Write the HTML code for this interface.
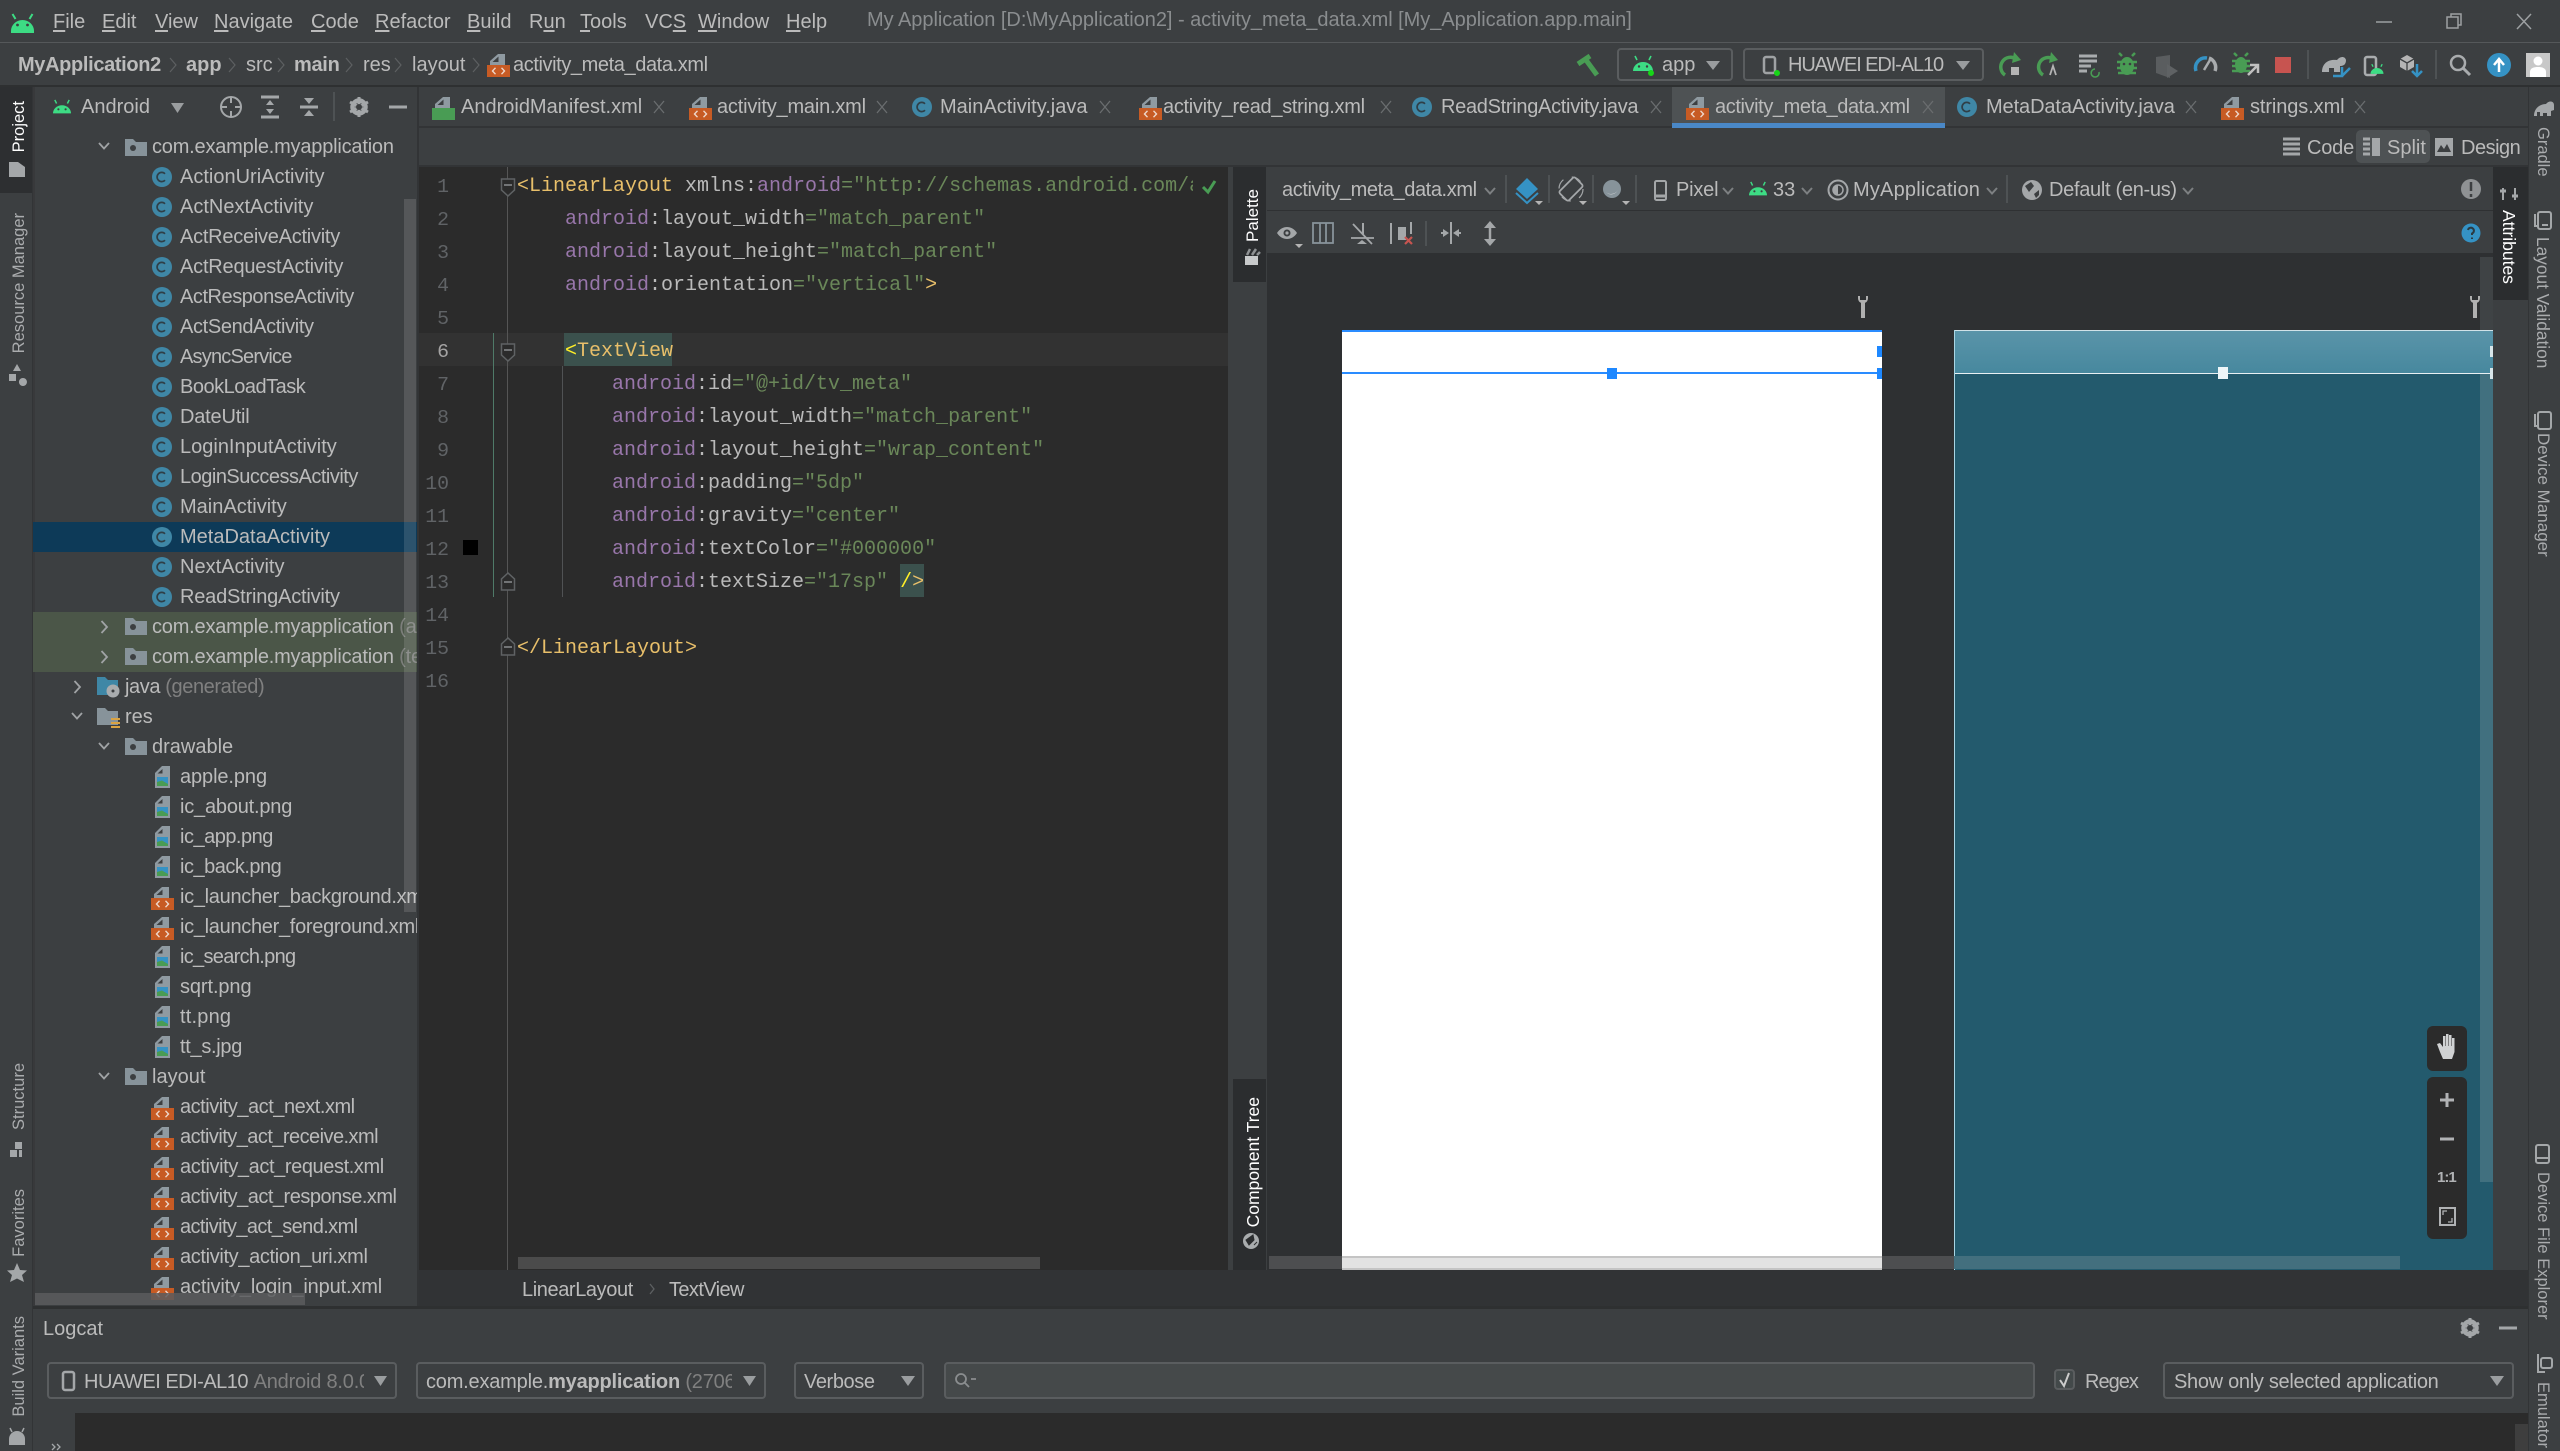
<!DOCTYPE html>
<html><head><meta charset="utf-8"><title>activity_meta_data.xml</title>
<style>
html,body{margin:0;padding:0;background:#3c3f41}
body{position:relative;width:2560px;height:1451px;overflow:hidden;font-family:"Liberation Sans",sans-serif;color:#bbb}
.b{position:absolute}
.t{position:absolute;white-space:nowrap;line-height:30px;font-size:20px;color:#bbb}
.m{position:absolute;white-space:pre;font:20px/30px "Liberation Mono",monospace;color:#bababa}
.n{position:absolute;left:400px;width:49px;text-align:right;font:19.83px/30px "Liberation Mono",monospace;color:#606366}
.g{color:#6a8759}.p{color:#9876aa}.y{color:#e8bf6a}.h{color:#ffef28}
u{text-decoration:underline;text-underline-offset:2px}
.vl,.vr{position:absolute;white-space:nowrap;font-size:16.5px;line-height:24px;width:24px;color:#aaacae;writing-mode:vertical-rl}
.vl{transform:rotate(180deg)}
.cb{position:absolute;border:2px solid #5a5d5f;border-radius:4px;box-sizing:border-box;background:#3c3f41}
.cl{position:absolute;overflow:hidden;height:30px}
.q{letter-spacing:-.4px}
</style></head><body>

<!-- backgrounds -->
<div class="b" style="left:0;top:42px;width:2560px;height:1px;background:#55585a"></div>
<div class="b" style="left:0;top:85px;width:2560px;height:2px;background:#2e3031"></div>
<div class="b" style="left:33px;top:87px;width:2px;height:1219px;background:#38393b"></div>
<div class="b" style="left:0;top:87px;width:32px;height:106px;background:#2d2f31"></div>
<div class="b" style="left:32px;top:87px;width:1px;height:1364px;background:#323436"></div>
<div class="b" style="left:417px;top:87px;width:2px;height:1219px;background:#323436"></div>
<div class="b" style="left:419px;top:126px;width:2109px;height:2px;background:#323436"></div>
<div class="b" style="left:419px;top:165px;width:2109px;height:2px;background:#323436"></div>
<div class="b" style="left:1672px;top:87px;width:273px;height:36px;background:#4e5254"></div>
<div class="b" style="left:1672px;top:123px;width:273px;height:5px;background:#4a88c7"></div>
<div class="b" style="left:2356px;top:130px;width:74px;height:33px;background:#4e5254;border-radius:5px"></div>
<!-- selection + changed rows -->
<div class="b" style="left:33px;top:522px;width:384px;height:30px;background:#0d3a58"></div>
<div class="b" style="left:33px;top:612px;width:384px;height:60px;background:#4b5648"></div>
<!-- editor -->
<div class="b" style="left:419px;top:167px;width:809px;height:1103px;background:#2b2b2b"></div>
<div class="b" style="left:419px;top:333px;width:809px;height:33px;background:#323232"></div>
<div class="b" style="left:564px;top:333px;width:108px;height:33px;background:#3b514d"></div>
<div class="b" style="left:900px;top:564px;width:24px;height:33px;background:#3b514d"></div>
<div class="b" style="left:507px;top:167px;width:1px;height:1103px;background:#555"></div>
<div class="b" style="left:493px;top:333px;width:1px;height:264px;background:#4f7a68"></div>
<div class="b" style="left:562px;top:366px;width:1px;height:231px;background:#505254"></div>
<div class="b" style="left:463px;top:540px;width:15px;height:15px;background:#000"></div>
<!-- palette strip -->
<div class="b" style="left:1233px;top:167px;width:33px;height:115px;background:#2b2d2f"></div>
<div class="b" style="left:1233px;top:1079px;width:33px;height:191px;background:#2b2d2f"></div>
<!-- design area -->
<div class="b" style="left:1267px;top:210px;width:1226px;height:1px;background:#2f3133"></div>
<div class="b" style="left:1267px;top:253px;width:1226px;height:1017px;background:#2e3032"></div>
<div class="b" style="left:2493px;top:167px;width:35px;height:133px;background:#2b2d2f"></div>
<div class="b" style="left:2528px;top:87px;width:1px;height:1364px;background:#323436"></div>
<!-- artboards -->
<div class="b" style="left:1342px;top:330px;width:540px;height:940px;background:#fff"></div>
<div class="b" style="left:1342px;top:330px;width:540px;height:2px;background:#2a8cff"></div>
<div class="b" style="left:1342px;top:372px;width:540px;height:2px;background:#2a8cff"></div>
<div class="b" style="left:1607px;top:368px;width:10px;height:11px;background:#1e88ff"></div>
<div class="b" style="left:1877px;top:346px;width:5px;height:11px;background:#1e88ff"></div>
<div class="b" style="left:1877px;top:368px;width:5px;height:11px;background:#1e88ff"></div>
<div class="b" style="left:1954px;top:330px;width:539px;height:940px;background:#235a6d"></div>
<div class="b" style="left:1954px;top:331px;width:539px;height:42px;background:linear-gradient(#5a94a9,#47889e)"></div>
<!-- design scrollbars -->
<div class="b" style="left:2480px;top:257px;width:13px;height:73px;background:#3f4345"></div>
<div class="b" style="left:2480px;top:374px;width:13px;height:808px;background:#41707f"></div>
<div class="b" style="left:1954px;top:330px;width:539px;height:1px;background:#d0e2e8"></div>
<div class="b" style="left:1954px;top:373px;width:539px;height:1px;background:#e8f0f3"></div>
<div class="b" style="left:1954px;top:330px;width:1px;height:940px;background:#a9d6e4"></div>
<div class="b" style="left:2218px;top:367px;width:10px;height:12px;background:#eef6f8"></div>
<div class="b" style="left:2490px;top:346px;width:3px;height:11px;background:#d8e6ea"></div>
<div class="b" style="left:2490px;top:368px;width:3px;height:11px;background:#d8e6ea"></div>
<div class="b" style="left:1269px;top:1256px;width:73px;height:13px;background:#4d4e50"></div>
<div class="b" style="left:1342px;top:1256px;width:540px;height:14px;background:#e2e2e2;border-top:2px solid #c4c4c4;border-bottom:2px solid #c4c4c4;box-sizing:border-box"></div>
<div class="b" style="left:1882px;top:1256px;width:72px;height:13px;background:#4d4e50"></div>
<div class="b" style="left:1954px;top:1256px;width:446px;height:13px;background:#436f7e"></div>
<!-- zoom buttons -->
<div class="b" style="left:2427px;top:1026px;width:40px;height:45px;background:#2b2b2b;border-radius:6px"></div>
<div class="b" style="left:2427px;top:1077px;width:40px;height:162px;background:#2b2b2b;border-radius:6px"></div>
<!-- bottom breadcrumb bar -->
<div class="b" style="left:419px;top:1270px;width:2109px;height:36px;background:#313335"></div>
<div class="b" style="left:518px;top:1257px;width:522px;height:12px;background:#4b4b4b"></div>
<div class="b" style="left:33px;top:1306px;width:2495px;height:3px;background:#2e3031"></div>
<!-- logcat -->
<div class="b" style="left:75px;top:1413px;width:2453px;height:38px;background:#2b2b2b"></div>
<div class="b" style="left:2515px;top:1424px;width:13px;height:27px;background:#3e3e3e"></div>
<div class="cb" style="left:47px;top:1362px;width:350px;height:37px"></div>
<div class="cb" style="left:416px;top:1362px;width:350px;height:37px"></div>
<div class="cb" style="left:794px;top:1362px;width:130px;height:37px"></div>
<div class="cb" style="left:944px;top:1362px;width:1091px;height:37px;background:#45494a"></div>
<div class="cb" style="left:2054px;top:1369px;width:21px;height:21px;background:#43494a"></div>
<div class="cb" style="left:2163px;top:1362px;width:351px;height:37px"></div>
<!-- toolbar combos -->
<div class="cb" style="left:1617px;top:48px;width:116px;height:33px"></div>
<div class="cb" style="left:1743px;top:48px;width:241px;height:33px"></div>

<!-- icons -->
<svg class="b" style="left:0;top:0" width="2560" height="1451" viewBox="0 0 2560 1451">
<defs>
<g id="ci"><circle cx="10" cy="0" r="10" fill="#3f87a6"/><path d="M13 -3.2A4.6 4.6 0 1 0 13 3.2" fill="none" stroke="#2f3f47" stroke-width="1.7"/></g>
<g id="xf"><path d="M3 0V-4L11 -11H18V0Z" fill="#8f9aa1"/><path d="M5.5 -3 11.500 -8.500V-3Z" fill="#3c3f41"/><rect x="0" y="0" width="23" height="12" fill="#c75b24"/><path d="M8.500 2.800 5.500 6 8.500 9.200M14.500 2.800 17.500 6 14.500 9.200" fill="none" stroke="#eed8cc" stroke-width="1.400"/></g>
<g id="if"><path d="M3 -1V-4L10 -11H18V-1Z" fill="#8f9aa1"/><path d="M5.500 -3.500 10.500 -8V-3.500Z" fill="#3c3f41"/><rect x="3" y="-2" width="15" height="13" fill="#8f9aa1"/><rect x="5" y="0" width="11" height="9" fill="#3592c4"/><path d="M5 5 10 3.500 16 7V9H5Z" fill="#499c54"/></g>
<g id="fd"><path d="M0 -9H8L11 -6H22V8H0Z" fill="#87939a"/><circle cx="8" cy="0" r="3" fill="#3c3f41"/></g>
<path id="cd" d="M-5 -3 0 2.500 5 -3" fill="none" stroke="#a0a3a5" stroke-width="1.800"/>
<path id="cr" d="M-2.500 -6 3 0 -2.500 6" fill="none" stroke="#a0a3a5" stroke-width="1.800"/>
<g id="an"><path d="M-10 6A10 9 0 0 1 10 6Z" fill="#3ddc84"/><path d="M-6 -5-8 -9M6 -5 8 -9" stroke="#3ddc84" stroke-width="1.600"/><circle cx="-4" cy="1.500" r="1.200" fill="#3c3f41"/><circle cx="4" cy="1.500" r="1.200" fill="#3c3f41"/></g>
<path id="sm" d="M-5 -3 0 2.500 5 -3" fill="none" stroke="#7d8082" stroke-width="2"/>
<path id="sep" d="M0 -7 6 0 0 7" fill="none" stroke="#5d6062" stroke-width="1.200"/>
<path id="fdd" d="M-6.500 -7H6.500V4L0 10-6.500 4Z" fill="#2b2b2b" stroke="#5f6264" stroke-width="1.500"/>
<path id="fdu" d="M-6.500 9H6.500V-2L0 -8-6.500 -2Z" fill="#2b2b2b" stroke="#5f6264" stroke-width="1.500"/>
</defs>

<!-- android logo -->
<g transform="translate(22.500,24)"><path d="M-11.500 7A11.500 11 0 0 1 11.500 7V9H-11.500Z" fill="#3ddc84"/><path d="M-7 -5-10 -10M7 -5 10 -10" stroke="#3ddc84" stroke-width="2"/><circle cx="-5" cy="1" r="1.400" fill="#3c3f41"/><circle cx="5" cy="1" r="1.400" fill="#3c3f41"/></g>

<!-- left strip icons -->
<path d="M9 162H18L25 167V177H9Z" fill="#a4a7a9"/>
<path d="M17 364 21 371H13ZM9 374H16V381H9ZM23 378a4 4 0 1 1-.1 0" fill="#a4a7a9"/>
<path d="M15 1142H22V1149H15ZM10 1150H17V1157H10ZM19 1150H22V1157H19Z" fill="#a4a7a9"/>
<path d="M17 1263 20 1270 27 1270.500 22 1275 24 1282 17 1278.500 10 1282 12 1275 7 1270.500 14 1270Z" fill="#a4a7a9"/>
<g transform="translate(17,1436)"><path d="M-8 9V3A8 8 0 0 1 8 3V9Z" fill="#a4a7a9"/><path d="M-5 -4-7 -8M5 -4 7 -8" stroke="#a4a7a9" stroke-width="1.500"/></g>

<!-- breadcrumb seps -->
<use href="#sep" x="170" y="65"/><use href="#sep" x="229" y="65"/><use href="#sep" x="278" y="65"/><use href="#sep" x="346" y="65"/><use href="#sep" x="395" y="65"/><use href="#sep" x="473" y="65"/>
<use href="#xf" x="487" y="65"/>

<!-- panel header -->
<use href="#an" transform="translate(62,108) scale(.9)"/>
<path d="M171 103H184L177.500 113Z" fill="#9a9d9f"/>
<circle cx="231" cy="107" r="10" fill="none" stroke="#a4a7a9" stroke-width="2"/><path d="M231 97V103M231 111V117M221 107H227M235 107H241" stroke="#a4a7a9" stroke-width="2"/>
<path d="M261 97H279M261 117H279" stroke="#a4a7a9" stroke-width="3"/><path d="M270 100 266 105H274ZM270 114 266 109H274Z" fill="#a4a7a9"/>
<path d="M300 107H318" stroke="#a4a7a9" stroke-width="3"/><path d="M304 98H314L309 104ZM304 116H314L309 110Z" fill="#a4a7a9"/>
<path d="M334 92V121" stroke="#55585a" stroke-width="1.500"/>
<g transform="translate(359,107)"><circle r="6.500" fill="none" stroke="#a4a7a9" stroke-width="4.500"/><path d="M0 -10V10M-9 -5 9 5M-9 5 9 -5" stroke="#a4a7a9" stroke-width="3"/><circle r="3" fill="#3c3f41"/></g>
<path d="M389 107H407" stroke="#a4a7a9" stroke-width="3"/>

<!-- window controls -->
<path d="M2376 22H2392" stroke="#9da0a2" stroke-width="1.500"/>
<path d="M2447 17H2458V28H2447ZM2451 17V14H2461V25H2458" fill="none" stroke="#9da0a2" stroke-width="1.500"/>
<path d="M2517 14 2531 29M2531 14 2517 29" stroke="#9da0a2" stroke-width="1.500"/>

<!-- main toolbar -->
<path d="M1578 64 1590 56" fill="none" stroke="#499c54" stroke-width="5"/><path d="M1586 60 1597 75" fill="none" stroke="#499c54" stroke-width="5"/>
<use href="#an" x="1643" y="65"/><circle cx="1651" cy="73" r="3" fill="#17d617"/>
<path d="M1706 61H1720L1713 70Z" fill="#9a9d9f"/>
<rect x="1764" y="57" width="11" height="16" rx="2" fill="none" stroke="#9fa2a4" stroke-width="2.500"/><circle cx="1777" cy="73" r="3" fill="#17d617"/>
<path d="M1956 61H1970L1963 70Z" fill="#9a9d9f"/>
<path d="M2016 59A8 8 0 1 0 2005 75" fill="none" stroke="#499c54" stroke-width="3.500"/><path d="M2014 52 2021 60 2012 63Z" fill="#499c54"/><rect x="2011" y="67" width="8" height="8" fill="#b4b4b4"/>
<path d="M2053 59A8 8 0 1 0 2043 75" fill="none" stroke="#499c54" stroke-width="3.500"/><path d="M2051 52 2058 60 2049 63Z" fill="#499c54"/><path d="M2050 75 2053 66 2056 75" fill="none" stroke="#b4b4b4" stroke-width="1.800"/>
<path d="M2079 56H2097M2079 61H2097M2079 66H2091M2079 71H2087" stroke="#a9acae" stroke-width="3"/><path d="M2099 72A4 4 0 1 1 2095 69" fill="none" stroke="#499c54" stroke-width="1.600"/>
<g transform="translate(2127,66)"><ellipse rx="7" ry="9" fill="#499c54"/><path d="M-5 -10-8 -13M5 -10 8 -13M-10 -4H10M-10 2H10M-9 7H9" stroke="#499c54" stroke-width="2.500"/></g><circle cx="2124" cy="64" r="1.300" fill="#3c3f41"/><circle cx="2130" cy="64" r="1.300" fill="#3c3f41"/>
<path d="M2156 57 2170 55V78L2156 73Z" fill="#5a5d5f"/><path d="M2167 64 2178 71 2167 78Z" fill="#5f6264"/>
<path d="M2196 71A10 10 0 0 1 2207 58" fill="none" stroke="#3592c4" stroke-width="3.500"/><path d="M2209 58A10 10 0 0 1 2215 71" fill="none" stroke="#a9acae" stroke-width="3.500"/><path d="M2204 70 2210 60" stroke="#a9acae" stroke-width="2.500"/>
<g transform="translate(2241,65)"><ellipse rx="6" ry="8" fill="#499c54"/><path d="M-4 -9-7 -12M4 -9 7 -12M-9 -4H9M-9 1H9M-9 6H9" stroke="#499c54" stroke-width="2.500"/></g><path d="M2248 75 2257 66M2250 65H2258V73" fill="none" stroke="#c0c0c0" stroke-width="2.500"/>
<rect x="2275" y="57" width="16" height="16" fill="#c75450"/>
<path d="M2308 50V79M2436 50V79" stroke="#55585a" stroke-width="1.500"/>
<path d="M2322 72C2322 62 2330 59 2337 60C2340 56 2345 56 2346 60C2346 65 2343 66 2340 66V72H2334V68H2329V72Z" fill="#a9acae"/><path d="M2342 67V76H2333M2342 76 2350 68" fill="none" stroke="#3592c4" stroke-width="2.500"/>
<rect x="2365" y="57" width="11" height="18" rx="2" fill="none" stroke="#a9acae" stroke-width="2.500"/><g transform="translate(2377,70) scale(.65)"><path d="M-10 6A10 9 0 0 1 10 6Z" fill="#3ddc84"/><path d="M-6 -5-8 -9M6 -5 8 -9" stroke="#3ddc84" stroke-width="2"/></g>
<path d="M2400 59 2407 55 2414 59V67L2407 71 2400 67Z" fill="#b4b4b4"/><path d="M2400 59 2407 63 2414 59M2407 63V71" stroke="#3c3f41" stroke-width="1.300" fill="none"/><path d="M2417 64V75M2412 71 2417 76 2422 71" fill="none" stroke="#3592c4" stroke-width="2.500"/>
<circle cx="2458" cy="63" r="7" fill="none" stroke="#a9acae" stroke-width="2.500"/><path d="M2463 68 2470 75" stroke="#a9acae" stroke-width="3"/>
<circle cx="2499" cy="65" r="12" fill="#3592c4"/><path d="M2499 72V60M2494 65 2499 59 2504 65" fill="none" stroke="#fff" stroke-width="2.500"/>
<rect x="2526" y="53" width="24" height="24" fill="#c8c8c8"/><circle cx="2538" cy="61" r="4.500" fill="#fff"/><path d="M2530 77V72C2530 68 2534 67 2538 67S2546 68 2546 72V77Z" fill="#fff"/>

<!-- editor tab icons -->
<g transform="translate(432,108)"><path d="M3 0V-4L11 -11H18V0Z" fill="#8f9aa1"/><path d="M5.500 -3 11.500 -8.500V-3Z" fill="#3c3f41"/><rect y="0" width="23" height="12" fill="#499c54"/></g>
<use href="#xf" x="689" y="108"/>
<use href="#ci" x="912" y="107"/>
<use href="#xf" x="1139" y="108"/>
<use href="#ci" x="1412" y="107"/>
<use href="#xf" x="1686" y="108"/>
<use href="#ci" x="1957" y="107"/>
<use href="#xf" x="2221" y="108"/>
<!-- close x -->
<g stroke="#6a6d6f" stroke-width="1.300"><path d="M654 101 664 113M664 101 654 113"/><path d="M877 101 887 113M887 101 877 113"/><path d="M1100 101 1110 113M1110 101 1100 113"/><path d="M1381 101 1391 113M1391 101 1381 113"/><path d="M1651 101 1661 113M1661 101 1651 113"/><path d="M1923 101 1933 113M1933 101 1923 113"/><path d="M2186 101 2196 113M2196 101 2186 113"/><path d="M2355 101 2365 113M2365 101 2355 113"/></g>

<!-- code/split/design icons -->
<path d="M2283 139H2300M2283 144H2300M2283 149H2300M2283 154H2300" stroke="#a4a7a9" stroke-width="3"/>
<path d="M2363 139H2370M2363 144H2370M2363 149H2370M2363 154H2370" stroke="#a4a7a9" stroke-width="3"/><rect x="2372" y="138" width="8" height="18" fill="#a4a7a9"/>
<rect x="2435" y="138" width="18" height="18" fill="#a4a7a9"/><path d="M2437 152 2441 145 2444 149 2447 144 2451 152Z" fill="#3c3f41"/>

<!-- tree: package row -->
<use href="#cd" x="104" y="146"/><use href="#fd" x="125" y="148"/>
<use href="#ci" x="152" y="177"/><use href="#ci" x="152" y="207"/><use href="#ci" x="152" y="237"/><use href="#ci" x="152" y="267"/><use href="#ci" x="152" y="297"/><use href="#ci" x="152" y="327"/><use href="#ci" x="152" y="357"/><use href="#ci" x="152" y="387"/><use href="#ci" x="152" y="417"/><use href="#ci" x="152" y="447"/><use href="#ci" x="152" y="477"/><use href="#ci" x="152" y="507"/><use href="#ci" x="152" y="537"/><use href="#ci" x="152" y="567"/><use href="#ci" x="152" y="597"/>
<use href="#cr" x="104" y="627"/><use href="#fd" x="125" y="627"/>
<use href="#cr" x="104" y="657"/><use href="#fd" x="125" y="657"/>
<use href="#cr" x="77" y="687"/>
<path d="M97 677H105L108 680H118V695H97Z" fill="#3f87a6"/><circle cx="113" cy="691" r="6.500" fill="#a9acae"/><circle cx="113" cy="691" r="1.500" fill="#3c3f41"/>
<use href="#cd" x="77" y="716"/>
<path d="M97 708H105L108 711H118V725H97Z" fill="#87939a"/><path d="M111 719H120M111 723H120M111 727H120" stroke="#d9a343" stroke-width="2"/>
<use href="#cd" x="104" y="746"/><use href="#fd" x="125" y="747"/>
<use href="#if" x="152" y="777"/><use href="#if" x="152" y="807"/><use href="#if" x="152" y="837"/><use href="#if" x="152" y="867"/>
<use href="#xf" x="151" y="898"/><use href="#xf" x="151" y="928"/>
<use href="#if" x="152" y="957"/><use href="#if" x="152" y="987"/><use href="#if" x="152" y="1017"/><use href="#if" x="152" y="1047"/>
<use href="#cd" x="104" y="1076"/><use href="#fd" x="125" y="1077"/>
<use href="#xf" x="151" y="1108"/><use href="#xf" x="151" y="1138"/><use href="#xf" x="151" y="1168"/><use href="#xf" x="151" y="1198"/><use href="#xf" x="151" y="1228"/><use href="#xf" x="151" y="1258"/><use href="#xf" x="151" y="1288"/>

<!-- fold markers -->
<use href="#fdd" x="508" y="186"/><path d="M504 185H512" stroke="#8a8d8f" stroke-width="1.500"/>
<use href="#fdd" x="508" y="351"/><path d="M504 350H512" stroke="#8a8d8f" stroke-width="1.500"/>
<use href="#fdu" x="508" y="581"/><path d="M504 582H512" stroke="#8a8d8f" stroke-width="1.500"/>
<use href="#fdu" x="508" y="646"/><path d="M504 647H512" stroke="#8a8d8f" stroke-width="1.500"/>
<path d="M1203 187 1208 192 1215 181" fill="none" stroke="#499c54" stroke-width="3"/>

<!-- palette icons -->
<path d="M1245 256V265H1258V256Z" fill="#c8cacb"/><path d="M1247 255 1250 249M1252 255 1256 249M1257 255 1260 252" stroke="#8f9294" stroke-width="2.500"/>
<g transform="translate(1251,1241)"><circle r="8" fill="#a9acae"/><path d="M-5 -1 2 -6 3 -1-2 4ZM3 4 6 1" fill="#2b2d2f" stroke="#2b2d2f"/></g>

<!-- design toolbar row 1 -->
<use href="#sm" x="1490" y="191"/>
<path d="M1506 175V203M1549 175V203M1593 175V203M1636 175V203M2007 175V203" stroke="#55585a" stroke-width="1.500"/>
<path d="M1527 178 1538 189 1527 199 1516 189Z" fill="#3592c4"/><path d="M1516 193 1527 203 1538 193" fill="none" stroke="#3592c4" stroke-width="2"/><path d="M1535 201H1543L1539 205Z" fill="#b4b4b4"/>
<g transform="translate(1571,189) rotate(45)"><rect x="-6.500" y="-11" width="13" height="22" rx="2" fill="none" stroke="#a4a7a9" stroke-width="1.800"/></g><circle cx="1571" cy="189" r="12" fill="none" stroke="#a4a7a9" stroke-width="1.200" stroke-dasharray="10 9"/><path d="M1579 201H1587L1583 205Z" fill="#b4b4b4"/>
<circle cx="1612" cy="189" r="9" fill="#87939a"/><path d="M1606 192A7 7 0 0 0 1618 189A7 6 0 0 1 1606 192" fill="#d7dadb"/><path d="M1622 201H1630L1626 205Z" fill="#b4b4b4"/>
<rect x="1655" y="181" width="11" height="19" rx="1.500" fill="none" stroke="#a4a7a9" stroke-width="2"/><path d="M1656 196H1665" stroke="#a4a7a9" stroke-width="3"/>
<use href="#sm" x="1728" y="191"/>
<use href="#an" transform="translate(1758,190) scale(.9)"/>
<use href="#sm" x="1807" y="191"/>
<circle cx="1838" cy="190" r="9.500" fill="none" stroke="#a4a7a9" stroke-width="2"/><circle cx="1838" cy="190" r="5" fill="none" stroke="#a4a7a9" stroke-width="1.500"/><path d="M1838 185A5 5 0 0 0 1838 195Z" fill="#a4a7a9"/>
<use href="#sm" x="1992" y="191"/>
<circle cx="2032" cy="190" r="10" fill="#a4a7a9"/><path d="M2025 186 2031 182 2034 186 2029 192ZM2034 194 2039 190 2039 195 2036 198Z" fill="#3c3f41"/>
<use href="#sm" x="2188" y="191"/>
<circle cx="2471" cy="189" r="10" fill="#8f9294"/><path d="M2471 182V191M2471 194V197" stroke="#3c3f41" stroke-width="2.500"/>
<!-- design toolbar row 2 -->
<path d="M1277 233C1282 225 1292 225 1297 233C1292 241 1282 241 1277 233Z" fill="#a4a7a9"/><circle cx="1287" cy="233" r="3.500" fill="#3c3f41"/><circle cx="1287" cy="233" r="1.600" fill="#a4a7a9"/><path d="M1295 244H1303L1299 248Z" fill="#b4b4b4"/>
<rect x="1313" y="223" width="20" height="20" fill="none" stroke="#87939a" stroke-width="1.800"/><path d="M1320 223V243M1326 223V243" stroke="#87939a" stroke-width="1.800"/>
<path d="M1353 224 1372 244M1351 238H1374" stroke="#a4a7a9" stroke-width="1.800"/><path d="M1363 223V234" stroke="#a4a7a9" stroke-width="2"/><path d="M1357 244 1362 240 1367 244Z" fill="#a4a7a9"/>
<path d="M1391 223V244M1411 222V234" stroke="#a4a7a9" stroke-width="2"/><rect x="1398" y="227" width="8" height="13" fill="#a4a7a9"/><path d="M1405 237 1412 244M1412 237 1405 244" stroke="#c75450" stroke-width="2.200"/>
<path d="M1426 221V246" stroke="#55585a" stroke-width="1.500"/>
<path d="M1451 222V244M1441 233H1447M1455 233H1461" stroke="#a4a7a9" stroke-width="2"/><path d="M1449 233 1443 229V237ZM1453 233 1459 229V237Z" fill="#a4a7a9"/>
<path d="M1490 225V242" stroke="#a4a7a9" stroke-width="2.500"/><path d="M1484 228 1490 221 1496 228ZM1484 239 1490 246 1496 239Z" fill="#a4a7a9"/>
<circle cx="2471" cy="233" r="9.500" fill="#3592c4"/><path d="M2468 230A3 3 0 1 1 2472 233.500V235M2472 237.500V239" fill="none" stroke="#2b3a42" stroke-width="2"/>
<!-- attributes icon -->
<path d="M2503 188V200M2515 188V200" stroke="#a4a7a9" stroke-width="2"/><path d="M2500 191H2506M2512 196H2518" stroke="#a4a7a9" stroke-width="3"/>
<!-- wrenches -->
<path d="M1863 302V318" stroke="#b0b0b0" stroke-width="4"/><path d="M1858 298C1858 305 1868 305 1868 298V296H1866V300H1860V296H1858Z" fill="#b0b0b0"/>
<path d="M2475 302V318" stroke="#b0b0b0" stroke-width="4"/><path d="M2470 298C2470 305 2480 305 2480 298V296H2478V300H2472V296H2470Z" fill="#b0b0b0"/>
<!-- zoom panel icons -->
<path d="M2440 1052 2437 1044 2440 1043 2443 1047V1036H2445.500V1046H2446V1034H2448.500V1046H2449V1035H2451.500V1046H2452V1038H2454.500V1052L2452 1059H2443Z" fill="#d0d2d3"/>
<path d="M2447 1093V1107M2440 1100H2454" stroke="#b0b2b4" stroke-width="3"/>
<path d="M2440 1139H2454" stroke="#b0b2b4" stroke-width="3"/>
<rect x="2440" y="1208" width="15" height="17" fill="none" stroke="#b0b2b4" stroke-width="2"/><path d="M2443 1215V1211H2447M2452 1218V1222H2448" fill="none" stroke="#b0b2b4" stroke-width="1.300"/>
<!-- bottom breadcrumb sep -->
<path d="M650 1284 654 1289 650 1294" fill="none" stroke="#5d6062" stroke-width="1.300"/>
<!-- logcat icons -->
<g transform="translate(2470,1328)"><circle r="6.500" fill="none" stroke="#a4a7a9" stroke-width="4.500"/><path d="M0 -10V10M-9 -5 9 5M-9 5 9 -5" stroke="#a4a7a9" stroke-width="3"/><circle r="3" fill="#3c3f41"/></g>
<path d="M2499 1328H2517" stroke="#a4a7a9" stroke-width="3"/>
<rect x="63" y="1372" width="11" height="18" rx="2" fill="none" stroke="#a4a7a9" stroke-width="2.500"/>
<path d="M374 1376H387L380.500 1386Z" fill="#9a9d9f"/>
<path d="M743 1376H756L749.500 1386Z" fill="#9a9d9f"/>
<path d="M901 1376H915L908 1386Z" fill="#9a9d9f"/>
<path d="M2490 1376H2504L2497 1386Z" fill="#9a9d9f"/>
<circle cx="961" cy="1379" r="5" fill="none" stroke="#8a8d8f" stroke-width="1.800"/><path d="M965 1383 969 1387M971 1379H976" stroke="#8a8d8f" stroke-width="1.800"/>
<path d="M2060 1380 2064 1386 2069 1373" fill="none" stroke="#ccc" stroke-width="2"/>
<!-- left bottom >> -->
<path d="M52 1444 55 1447 52 1450M57 1444 60 1447 57 1450" fill="none" stroke="#a4a7a9" stroke-width="1.300"/>
<!-- right strip icons -->
<path d="M2534 116C2534 108 2540 104 2546 104C2549 100 2554 101 2554 105V110L2551 111V116H2547V113H2543V116H2540V112H2537V116Z" fill="#a4a7a9"/>
<g fill="none" stroke="#a4a7a9" stroke-width="2"><rect x="2538" y="212" width="13" height="17" rx="2"/><path d="M2535 214V226H2538M2542 225H2548"/>
<rect x="2538" y="412" width="13" height="17" rx="2"/><path d="M2535 414V426H2538"/>
<rect x="2536" y="1145" width="13" height="18" rx="2"/><path d="M2536 1158H2549"/>
<rect x="2541" y="1358" width="11" height="10" rx="2"/><path d="M2538 1354V1372H2545"/></g>
</svg>

<!-- left vertical text -->
<div class="vl" style="left:7px;top:101px;color:#fff">Project</div>
<div class="vl" style="left:7px;top:213px">Resource Manager</div>
<div class="vl" style="left:7px;top:1063px">Structure</div>
<div class="vl" style="left:7px;top:1189px">Favorites</div>
<div class="vl" style="left:7px;top:1316px">Build Variants</div>
<!-- right vertical text -->
<div class="vr" style="left:2531px;top:127px">Gradle</div>
<div class="vr" style="left:2531px;top:237px;font-size:17.300px">Layout Validation</div>
<div class="vr" style="left:2531px;top:433px;font-size:17px">Device Manager</div>
<div class="vr" style="left:2531px;top:1172px">Device File Explorer</div>
<div class="vr" style="left:2531px;top:1382px">Emulator</div>
<div class="vr" style="left:2497px;top:210px;color:#fff;font-size:17.500px">Attributes</div>
<div class="vl" style="left:1241px;top:189px;color:#fff;font-size:17px">Palette</div>
<div class="vl" style="left:1241px;top:1097px;color:#fff;font-size:17.500px">Component Tree</div>

<!-- menu -->
<span class="t" style="left:53px;top:7px"><u>F</u>ile</span>
<span class="t" style="left:102px;top:7px"><u>E</u>dit</span>
<span class="t" style="left:155px;top:7px"><u>V</u>iew</span>
<span class="t" style="left:214px;top:7px"><u>N</u>avigate</span>
<span class="t" style="left:311px;top:7px"><u>C</u>ode</span>
<span class="t" style="left:375px;top:7px"><u>R</u>efactor</span>
<span class="t" style="left:467px;top:7px"><u>B</u>uild</span>
<span class="t" style="left:529px;top:7px">R<u>u</u>n</span>
<span class="t" style="left:580px;top:7px"><u>T</u>ools</span>
<span class="t" style="left:645px;top:7px">VC<u>S</u></span>
<span class="t" style="left:698px;top:7px"><u>W</u>indow</span>
<span class="t" style="left:786px;top:7px"><u>H</u>elp</span>
<span class="t" style="left:867px;top:5px;color:#8a8d8f;letter-spacing:-.04px">My Application [D:\MyApplication2] - activity_meta_data.xml [My_Application.app.main]</span>

<!-- breadcrumb -->
<span class="t" style="left:18px;top:50px;font-weight:bold;letter-spacing:-.35px">MyApplication2</span>
<span class="t" style="left:186px;top:50px;font-weight:bold">app</span>
<span class="t" style="left:246px;top:50px">src</span>
<span class="t" style="left:294px;top:50px;font-weight:bold;letter-spacing:-.3px">main</span>
<span class="t" style="left:363px;top:50px">res</span>
<span class="t" style="left:412px;top:50px">layout</span>
<span class="t q" style="left:513px;top:50px">activity_meta_data.xml</span>

<!-- toolbar -->
<span class="t" style="left:1662px;top:50px">app</span>
<span class="t" style="left:1788px;top:50px;letter-spacing:-1.100px">HUAWEI EDI-AL10</span>

<!-- panel header -->
<span class="t" style="left:81px;top:92px">Android</span>

<!-- tabs -->
<span class="t" style="left:461px;top:92px">AndroidManifest.xml</span>
<span class="t" style="left:717px;top:92px;letter-spacing:-.2px">activity_main.xml</span>
<span class="t" style="left:940px;top:92px">MainActivity.java</span>
<span class="t" style="left:1163px;top:92px;letter-spacing:-.3px">activity_read_string.xml</span>
<span class="t" style="left:1441px;top:92px;letter-spacing:-.3px">ReadStringActivity.java</span>
<span class="t q" style="left:1715px;top:92px">activity_meta_data.xml</span>
<span class="t" style="left:1986px;top:92px;letter-spacing:-.1px">MetaDataActivity.java</span>
<span class="t" style="left:2250px;top:92px;letter-spacing:-.1px">strings.xml</span>

<span class="t" style="left:2307px;top:133px;letter-spacing:-.2px">Code</span>
<span class="t" style="left:2387px;top:133px">Split</span>
<span class="t" style="left:2461px;top:133px;letter-spacing:-.5px">Design</span>

<!-- tree -->
<div class="b" style="left:0;top:1px;width:417px;height:1305px;overflow:hidden">
<span class="t" style="left:152px;top:131px;letter-spacing:-.2px">com.example.myapplication</span>
<span class="t" style="left:180px;top:161px">ActionUriActivity</span>
<span class="t" style="left:180px;top:191px">ActNextActivity</span>
<span class="t" style="left:180px;top:221px;letter-spacing:-.25px">ActReceiveActivity</span>
<span class="t" style="left:180px;top:251px;letter-spacing:-.2px">ActRequestActivity</span>
<span class="t" style="left:180px;top:281px;letter-spacing:-.45px">ActResponseActivity</span>
<span class="t" style="left:180px;top:311px;letter-spacing:-.35px">ActSendActivity</span>
<span class="t" style="left:180px;top:341px;letter-spacing:-.8px">AsyncService</span>
<span class="t" style="left:180px;top:371px;letter-spacing:-.5px">BookLoadTask</span>
<span class="t" style="left:180px;top:401px;letter-spacing:-.2px">DateUtil</span>
<span class="t" style="left:180px;top:431px">LoginInputActivity</span>
<span class="t" style="left:180px;top:461px;letter-spacing:-.5px">LoginSuccessActivity</span>
<span class="t" style="left:180px;top:491px">MainActivity</span>
<span class="t" style="left:180px;top:521px">MetaDataActivity</span>
<span class="t" style="left:180px;top:551px">NextActivity</span>
<span class="t" style="left:180px;top:581px;letter-spacing:-.2px">ReadStringActivity</span>
<span class="t" style="left:152px;top:611px;letter-spacing:-.2px">com.example.myapplication <span style="color:#7d7f7c">(androidTest)</span></span>
<span class="t" style="left:152px;top:641px;letter-spacing:-.2px">com.example.myapplication <span style="color:#7d7f7c">(test)</span></span>
<span class="t" style="left:125px;top:671px;letter-spacing:-.4px">java <span style="color:#808080">(generated)</span></span>
<span class="t" style="left:125px;top:701px">res</span>
<span class="t" style="left:152px;top:731px">drawable</span>
<span class="t" style="left:180px;top:761px;letter-spacing:-.1px">apple.png</span>
<span class="t" style="left:180px;top:791px;letter-spacing:-.2px">ic_about.png</span>
<span class="t" style="left:180px;top:821px;letter-spacing:-.5px">ic_app.png</span>
<span class="t" style="left:180px;top:851px;letter-spacing:-.5px">ic_back.png</span>
<span class="t" style="left:180px;top:881px;letter-spacing:-.3px">ic_launcher_background.xml</span>
<span class="t" style="left:180px;top:911px;letter-spacing:-.3px">ic_launcher_foreground.xml</span>
<span class="t" style="left:180px;top:941px;letter-spacing:-.7px">ic_search.png</span>
<span class="t" style="left:180px;top:971px;letter-spacing:-.1px">sqrt.png</span>
<span class="t" style="left:180px;top:1001px;letter-spacing:.2px">tt.png</span>
<span class="t" style="left:180px;top:1031px;letter-spacing:-.3px">tt_s.jpg</span>
<span class="t" style="left:152px;top:1061px">layout</span>
<span class="t" style="left:180px;top:1091px;letter-spacing:-.47px">activity_act_next.xml</span>
<span class="t" style="left:180px;top:1121px;letter-spacing:-.55px">activity_act_receive.xml</span>
<span class="t" style="left:180px;top:1151px;letter-spacing:-.4px">activity_act_request.xml</span>
<span class="t" style="left:180px;top:1181px;letter-spacing:-.5px">activity_act_response.xml</span>
<span class="t" style="left:180px;top:1211px;letter-spacing:-.6px">activity_act_send.xml</span>
<span class="t" style="left:180px;top:1241px;letter-spacing:-.35px">activity_action_uri.xml</span>
<span class="t" style="left:180px;top:1271px;letter-spacing:-.15px">activity_login_input.xml</span>
</div>
<div class="b" style="left:404px;top:199px;width:12px;height:713px;background:rgba(255,255,255,.13)"></div>
<div class="b" style="left:35px;top:1293px;width:270px;height:12px;background:#5a5c5e;opacity:.85"></div>

<!-- line numbers -->
<div class="n" style="top:172px">1</div><div class="n" style="top:205px">2</div><div class="n" style="top:238px">3</div><div class="n" style="top:271px">4</div><div class="n" style="top:304px">5</div><div class="n" style="top:337px;color:#a4a3a3">6</div><div class="n" style="top:370px">7</div><div class="n" style="top:403px">8</div><div class="n" style="top:436px">9</div><div class="n" style="top:469px">10</div><div class="n" style="top:502px">11</div><div class="n" style="top:535px">12</div><div class="n" style="top:568px">13</div><div class="n" style="top:601px">14</div><div class="n" style="top:634px">15</div><div class="n" style="top:667px">16</div>

<!-- code -->
<div class="m" style="left:517px;top:172px;width:676px;overflow:hidden"><span class="y">&lt;LinearLayout</span> xmlns:<span class="p">android</span><span class="g">="http://schemas.android.com/apk/res/android"</span></div>
<div class="m" style="left:565px;top:205px"><span class="p">android</span>:layout_width<span class="g">="match_parent"</span></div>
<div class="m" style="left:565px;top:238px"><span class="p">android</span>:layout_height<span class="g">="match_parent"</span></div>
<div class="m" style="left:565px;top:271px"><span class="p">android</span>:orientation<span class="g">="vertical"</span><span class="y">&gt;</span></div>
<div class="m" style="left:565px;top:337px"><span class="h">&lt;</span><span class="y">TextView</span></div>
<div class="m" style="left:612px;top:370px"><span class="p">android</span>:id<span class="g">="@+id/tv_meta"</span></div>
<div class="m" style="left:612px;top:403px"><span class="p">android</span>:layout_width<span class="g">="match_parent"</span></div>
<div class="m" style="left:612px;top:436px"><span class="p">android</span>:layout_height<span class="g">="wrap_content"</span></div>
<div class="m" style="left:612px;top:469px"><span class="p">android</span>:padding<span class="g">="5dp"</span></div>
<div class="m" style="left:612px;top:502px"><span class="p">android</span>:gravity<span class="g">="center"</span></div>
<div class="m" style="left:612px;top:535px"><span class="p">android</span>:textColor<span class="g">="#000000"</span></div>
<div class="m" style="left:612px;top:568px"><span class="p">android</span>:textSize<span class="g">="17sp"</span> <span class="h">/</span><span class="y">&gt;</span></div>
<div class="m" style="left:517px;top:634px"><span class="y">&lt;/LinearLayout&gt;</span></div>

<!-- design toolbar text -->
<span class="t q" style="left:1282px;top:175px">activity_meta_data.xml</span>
<span class="t" style="left:1676px;top:175px;letter-spacing:-.2px">Pixel</span>
<span class="t" style="left:1773px;top:175px">33</span>
<span class="t" style="left:1853px;top:175px;letter-spacing:.2px">MyApplication</span>
<span class="t" style="left:2049px;top:175px;letter-spacing:-.3px">Default (en-us)</span>

<span class="b" style="left:2437px;top:1170px;font:bold 15px/16px 'Liberation Sans',sans-serif;color:#b0b2b4;letter-spacing:-1px">1:1</span>

<!-- bottom -->
<span class="t" style="left:522px;top:1275px;letter-spacing:-.4px">LinearLayout</span>
<span class="t" style="left:669px;top:1275px;letter-spacing:-.6px">TextView</span>
<span class="t" style="left:43px;top:1314px">Logcat</span>
<div class="cl" style="left:84px;top:1367px;width:280px"><span class="t" style="left:0;top:0"><span style="letter-spacing:-.5px">HUAWEI EDI-AL10</span> <span style="color:#808080;letter-spacing:-.2px">Android 8.0.0</span></span></div>
<div class="cl" style="left:426px;top:1367px;width:306px"><span class="t" style="left:0;top:0;letter-spacing:-.2px">com.example.<b>myapplication</b> <span style="color:#808080">(27065)</span></span></div>
<span class="t" style="left:804px;top:1367px;letter-spacing:-.4px">Verbose</span>
<span class="t" style="left:2085px;top:1367px;letter-spacing:-1px">Regex</span>
<span class="t" style="left:2174px;top:1367px;letter-spacing:-.3px">Show only selected application</span>
</body></html>
